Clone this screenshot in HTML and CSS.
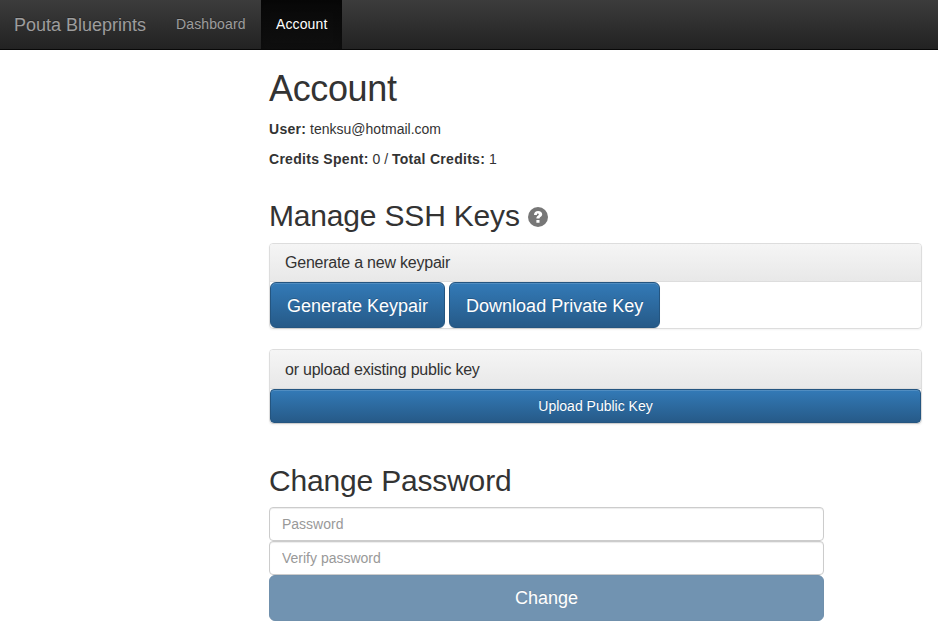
FILE: index.html
```html
<!DOCTYPE html>
<html lang="en">
<head>
<meta charset="utf-8">
<title>Pouta Blueprints</title>
<link rel="stylesheet" href="styles.css">
</head>
<body>
<nav class="navbar">
  <a class="brand">Pouta Blueprints</a>
  <a class="nav-link">Dashboard</a>
  <a class="nav-link active">Account</a>
</nav>
<main class="content">
  <h1>Account</h1>
  <p><strong>User:</strong> tenksu@hotmail.com</p>
  <p><strong>Credits Spent:</strong> 0 / <strong>Total Credits:</strong> 1</p>
  <h2>Manage SSH Keys <svg class="help" viewBox="0 0 20 20"><circle cx="10" cy="10" r="10" fill="#777"/><path d="M6 8C6.100 5.300 7.600 4 10.100 4c2.500 0 4.100 1.300 4.100 3.300 0 2.600-2.700 2.500-2.700 4.200H8.400c0-2.700 2.400-2.800 2.400-4 0-.6-.3-.9-.9-.9-.7 0-1 .5-1 1.400zM8.400 13h3.100v2.700H8.400z" fill="#fff"/></svg></h2>
  <section class="panel">
    <h3 class="panel-heading">Generate a new keypair</h3>
    <div class="buttons"><button class="btn btn-lg">Generate Keypair</button><button class="btn btn-lg">Download Private Key</button></div>
  </section>
  <section class="panel">
    <h3 class="panel-heading upload-heading">or upload existing public key</h3>
    <button class="btn btn-block">Upload Public Key</button>
  </section>
  <h2 class="password-title">Change Password</h2>
  <form class="password-form">
    <input type="password" placeholder="Password">
    <input type="password" placeholder="Verify password">
    <button class="btn btn-lg btn-block" disabled>Change</button>
  </form>
</main>
</body>
</html>
```
FILE: styles.css
```css
* { box-sizing: border-box; }
body {
  margin: 0;
  background: #fff;
  color: #333;
  font: 14px/20px "Liberation Sans", Arial, sans-serif;
  overflow: hidden;
}
.navbar {
  display: flex;
  height: 50px;
  background: linear-gradient(#3c3c3c, #222);
  border-bottom: 1px solid #080808;
  color: #9d9d9d;
  text-shadow: 0 -1px 0 rgba(0, 0, 0, .25);
}
.brand { padding: 15px 15px 15px 14px; font-size: 18px; width: 161px; white-space: nowrap; }
.nav-link { padding: 14px 15px; width: 100px; letter-spacing: .12px; }
.nav-link.active {
  width: 81px;
  color: #fff;
  background: linear-gradient(#080808, #0f0f0f);
  box-shadow: inset 0 3px 9px rgba(0, 0, 0, .25);
}
.content { margin-left: 269px; width: 653px; padding-top: 19px; }
h1, h2, h3 { font-weight: 400; line-height: 1.1; margin: 0; }
h1 { font-size: 36px; height: 40px; margin-bottom: 10px; letter-spacing: -.36px; }
h2 { font-size: 30px; height: 33px; margin: 30px 0 11px; letter-spacing: -.18px; }
p { margin: 0 0 10px; }
strong { letter-spacing: .28px; }
.help { width: 20px; height: 20px; vertical-align: -1px; }
.panel {
  margin-bottom: 20px;
  border: 1px solid #ddd;
  border-radius: 4px;
  box-shadow: 0 1px 2px rgba(0, 0, 0, .05);
}
.panel-heading {
  height: 38px;
  padding: 10px 15px;
  font-size: 16px;
  letter-spacing: -.22px;
  background: linear-gradient(#f5f5f5, #e8e8e8);
  border-bottom: 1px solid #ddd;
  border-radius: 3px 3px 0 0;
}
.upload-heading { height: 39px; padding-top: 11px; }
.buttons { display: flex; gap: 4px; }
.btn {
  display: block;
  padding: 6px 12px;
  font: 14px/20px "Liberation Sans", Arial, sans-serif;
  color: #fff;
  text-shadow: 0 -1px 0 rgba(0, 0, 0, .2);
  background: linear-gradient(#337ab7, #265a88);
  border: 1px solid #245580;
  border-radius: 4px;
  box-shadow: inset 0 1px 0 rgba(255, 255, 255, .15), 0 1px 1px rgba(0, 0, 0, .075);
}
.btn-lg { height: 46px; padding: 10px 16px; font-size: 18px; line-height: 24px; border-radius: 6px; }
.buttons .btn-lg { padding: 11px 16px 9px; }
.btn-block { width: 100%; }
.password-title { margin-top: 40px; margin-bottom: 10px; }
.password-form { width: 555px; }
input {
  display: block;
  width: 100%;
  height: 34px;
  padding: 6px 12px;
  font: 14px/20px "Liberation Sans", Arial, sans-serif;
  border: 1px solid #ccc;
  border-radius: 4px;
  box-shadow: inset 0 1px 1px rgba(0, 0, 0, .075);
}
input::placeholder { color: #999; opacity: 1; }
.btn:disabled { background: #265a88; opacity: .65; box-shadow: none; }
```
